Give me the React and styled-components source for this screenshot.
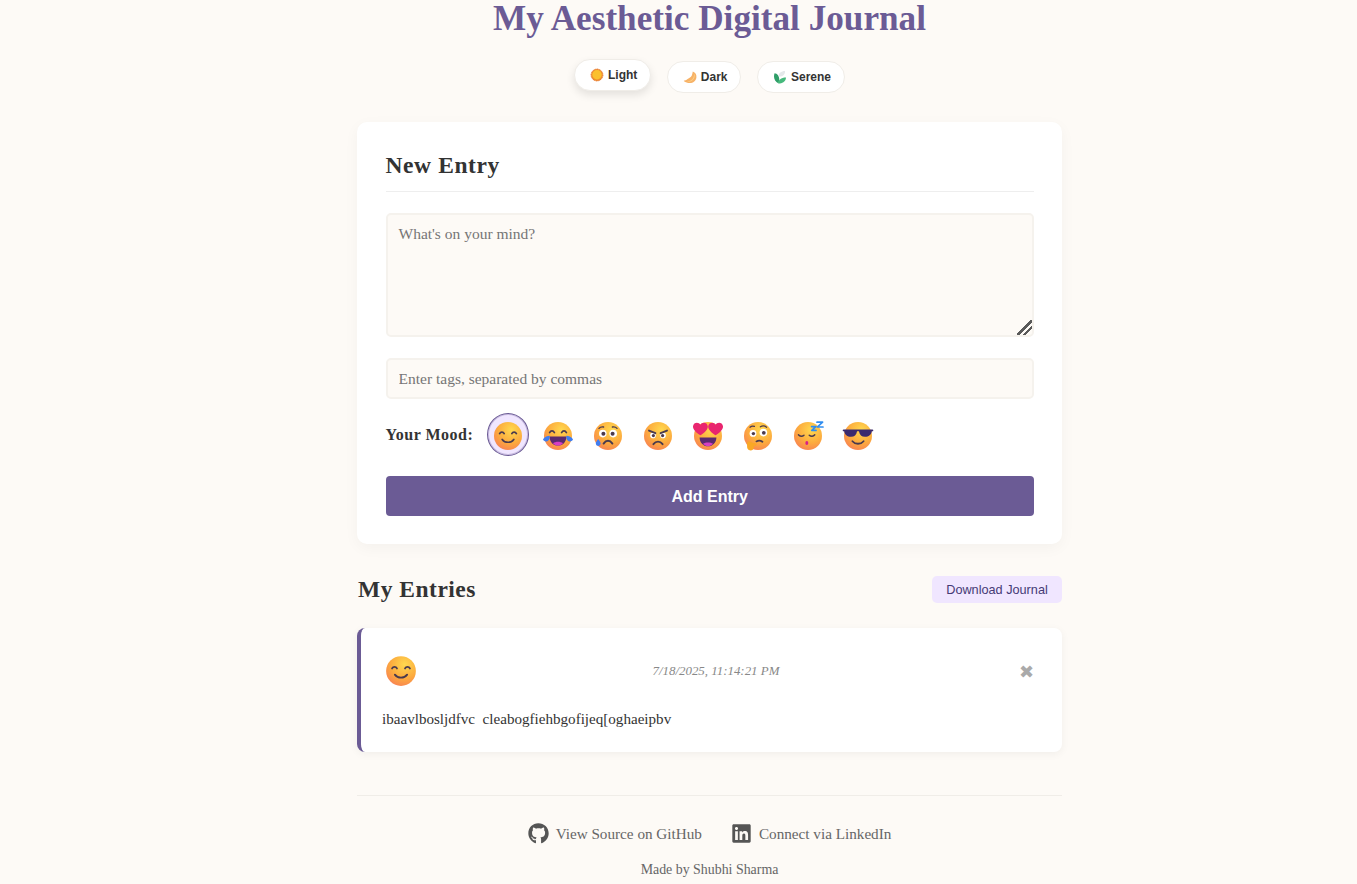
import React, { useId } from 'react';
import styled, { createGlobalStyle } from 'styled-components';
import { FaGithub, FaLinkedin } from 'react-icons/fa';

const GlobalStyle = createGlobalStyle`
    html, body {
        margin: 0;
        padding: 0;
        background-color: #fdfaf6;
    }
    body {
        font-family: "Liberation Serif", serif;
        color: #333333;
        overflow: hidden;
    }
`;

const Face = ({ size = 32, children }) => {
    const id = useId();
    return (
        <svg width={size} height={size} viewBox="0 0 32 32">
            <defs>
                <radialGradient id={id} cx="0.62" cy="0.28" r="0.85">
                    <stop offset="0" stopColor="#ffd84f" />
                    <stop offset="0.55" stopColor="#fcab3e" />
                    <stop offset="0.85" stopColor="#f98a4e" />
                    <stop offset="1" stopColor="#f27f9c" />
                </radialGradient>
            </defs>
            <circle cx="16" cy="16" r="14" fill={`url(#${id})`} />
            {children}
        </svg>
    );
};

const ink = '#4a3a4e';

const Smile = ({ size }) => (
    <Face size={size}>
        <g fill="none" stroke={ink} strokeWidth="1.7" strokeLinecap="round">
            <path d="M7.6 13.6c1-2 3.6-2 4.6 0" />
            <path d="M19.8 13.6c1-2 3.6-2 4.6 0" />
            <path d="M10.2 19.4c2.8 3.8 8.8 3.8 11.6 0" />
        </g>
    </Face>
);

const Laugh = ({ size }) => (
    <Face size={size}>
        <g fill="none" stroke={ink} strokeWidth="1.7" strokeLinecap="round">
            <path d="M7.6 12.6c1.2-2.2 3.6-2.2 4.8 0" />
            <path d="M19.6 12.6c1.2-2.2 3.6-2.2 4.8 0" />
        </g>
        <path d="M7.6 16.4h16.8c0 5.6-3.6 9.2-8.4 9.2s-8.4-3.6-8.4-9.2z" fill="#5b2a70" />
        <path d="M11 23.2c2.8-2 7.2-2 10 0-1.4 1.6-3 2.4-5 2.4s-3.6-.8-5-2.4z" fill="#d63fc4" />
        <path d="M1 19.2c2-2.4 4.6-3.4 6.6-3.4.6 2.8-.8 5.4-3.2 5.6-1.6.2-3-.8-3.4-2.2z" fill="#3f7df0" />
        <path d="M31 19.2c-2-2.4-4.6-3.4-6.6-3.4-.6 2.8.8 5.4 3.2 5.6 1.6.2 3-.8 3.4-2.2z" fill="#3f7df0" />
    </Face>
);

const Cry = ({ size }) => (
    <Face size={size}>
        <circle cx="10.8" cy="13.6" r="3.8" fill="#fff" />
        <circle cx="21.2" cy="13.6" r="3.8" fill="#fff" />
        <circle cx="11.4" cy="13.8" r="2" fill={ink} />
        <circle cx="20.6" cy="13.8" r="2" fill={ink} />
        <g fill="none" stroke={ink} strokeWidth="1.3" strokeLinecap="round">
            <path d="M7 8.4c1.2-1.4 3-1.8 4.6-1.4" />
            <path d="M25 8.4c-1.2-1.4-3-1.8-4.6-1.4" />
        </g>
        <path d="M11.6 23.6c2.6-3.8 6.2-3.8 8.8 0" fill="none" stroke={ink} strokeWidth="1.9" strokeLinecap="round" />
        <path d="M6.2 19c1.4 2 2.4 3.2 2.4 4.6a2.4 2.4 0 0 1-4.800 0c0-1.4 1-2.6 2.4-4.6z" fill="#3f7df0" />
    </Face>
);

const Angry = ({ size }) => (
    <Face size={size}>
        <circle cx="11" cy="15.4" r="2.8" fill="#fff" />
        <circle cx="21" cy="15.4" r="2.8" fill="#fff" />
        <circle cx="11.4" cy="15.6" r="1.6" fill={ink} />
        <circle cx="20.6" cy="15.6" r="1.6" fill={ink} />
        <g fill="none" stroke={ink} strokeWidth="1.9" strokeLinecap="round">
            <path d="M7 10.6l6.4 2.6" />
            <path d="M25 10.6l-6.4 2.6" />
            <path d="M11.4 24.2c2.6-3.4 6.6-3.4 9.2 0" />
        </g>
    </Face>
);

const Heart = ({ x, y }) => (
    <path
        transform={`translate(${x} ${y})`}
        d="M0 -3.6C1.2 -6.4 6.8 -6.6 7.4 -2.2 7.8 1.2 3.4 4.8 0 6.8-3.4 4.8-7.8 1.2-7.4-2.2-6.8-6.6-1.2-6.4 0-3.6z"
        fill="#e9266f"
    />
);

const HeartEyes = ({ size }) => (
    <Face size={size}>
        <path d="M7.6 17.4h16.8c0 5-3.6 8.8-8.4 8.8s-8.4-3.8-8.4-8.8z" fill="#5b2a70" />
        <path d="M11 23.8c2.8-1.8 7.2-1.8 10 0-1.4 1.6-3 2.4-5 2.4s-3.6-.8-5-2.4z" fill="#d63fc4" />
        <Heart x={8.4} y={8.4} />
        <Heart x={23.6} y={8.4} />
    </Face>
);

const Thinking = ({ size }) => (
    <Face size={size}>
        <circle cx="11" cy="13.4" r="3.4" fill="#fff" />
        <circle cx="21.4" cy="12.6" r="3.8" fill="#fff" />
        <circle cx="11.4" cy="13.6" r="1.7" fill={ink} />
        <circle cx="21.8" cy="12.8" r="1.9" fill={ink} />
        <g fill="none" stroke={ink} strokeWidth="1.3" strokeLinecap="round">
            <path d="M8 7.2c1.4-1.2 3-1.4 4.4-.8" />
            <path d="M18.4 6.8c2-1.2 4.4-1 6.2.4" />
            <path d="M14.4 21.4c2-1.2 4-1.2 6 .4" strokeWidth="1.8" />
        </g>
        <path d="M5.4 21.8c1.6-.8 3.4-.2 4.4.6l4 1.2c1.4.6 1 2.4-.4 2.2l-1.6-.2c.4 1.6.2 3.2-1 4.2-1.6 1.2-4.2.8-5.2-1-.8-1.6-.4-5.8-.2-7z" fill="#f9a825" />
    </Face>
);

const Sleepy = ({ size }) => (
    <Face size={size}>
        <g fill="none" stroke={ink} strokeWidth="1.4" strokeLinecap="round">
            <path d="M6.4 14.8c1.4 1.8 4 1.8 5.6.4" />
            <path d="M17.2 15.2c1.6 1.4 4.2 1.4 5.6-.4" />
        </g>
        <ellipse cx="14.8" cy="23" rx="1.5" ry="1.9" fill="#d6208a" />
        <path d="M19.6 6.6h4.2l-4 3.8h4.2M25 2.2h5.6l-5.2 4.8h5.6" fill="none" stroke="#2f8df0" strokeWidth="1.7" strokeLinejoin="round" strokeLinecap="round" />
    </Face>
);

const Cool = ({ size }) => (
    <Face size={size}>
        <path d="M1.6 10.4h28.800" stroke="#3b2a6e" strokeWidth="1.8" strokeLinecap="round" />
        <path d="M3 10h11c.8 0 1.2.6 1 1.4-.6 3.2-2.6 5.4-6 5.4-3.8 0-6.4-2.4-6.8-5.6C2.1 10.5 2.4 10 3 10z" fill="#3b2a6e" />
        <path d="M29 10H18c-.8 0-1.2.6-1 1.4.6 3.2 2.6 5.4 6 5.4 3.8 0 6.4-2.4 6.8-5.6.1-.7-.2-1.2-.8-1.2z" fill="#3b2a6e" />
        <path d="M10.4 21.2c2.8 3.4 8.4 3.4 11.2 0" fill="none" stroke={ink} strokeWidth="1.8" strokeLinecap="round" />
    </Face>
);

const Sun = () => (
    <svg width="14" height="14" viewBox="0 0 14 14">
        <circle cx="7" cy="7" r="5.9" fill="#ef8f2e" strokeDasharray="1.2 .6" stroke="#e8762c" strokeWidth="1" />
        <circle cx="7" cy="6.8" r="4.7" fill="#fbc02d" />
    </svg>
);

const Moon = () => (
    <svg width="14" height="14" viewBox="0 0 14 14">
        <path d="M9.8 1.4c2.6.8 4 3.2 3.6 6-.4 3.2-3.2 5.600-6.600 5.600-2.200 0-4.200-.6-5.800-1.800-.4-.4 0-.8.4-.8 1.200.2 2.200-.6 3.200-1.400 1.800-1.200 3.200-1.600 4.200-3.600.4-1.200.6-2.400 1-4z" fill="#f7b267" />
        <path d="M11.4 3.400c.8 2.800 0 5.400-2.200 7-1.600 1.200-3.600 1.600-5.600 1.200 3-.2 5.800-1.800 6.800-4.200.6-1.400.8-2.800 1-4z" fill="#fcd28a" />
    </svg>
);

const Herb = () => (
    <svg width="14" height="14" viewBox="0 0 14 14">
        <path d="M1.6 3.200c2.800.4 4.400 2.400 4.600 5.200.2 1.800-.2 3.400-1 4.800C2.600 12 1 9.400 1 6.600c0-1.200.2-2.400.6-3.400z" fill="#2f9e68" />
        <path d="M5 13.200c.2-3 3-5.600 8-5.600-.2 3.600-3.200 6.600-8 5.600z" fill="#46b97c" />
        <path d="M5.400 6.200C5.600 3.400 8.200 1 12 1c.2 1.800-.4 3.400-1.800 4.400-1.400 1-3 1.200-4.800.8z" fill="#e4e8ea" />
    </svg>
);

const moods = [Smile, Laugh, Cry, Angry, HeartEyes, Thinking, Sleepy, Cool];

const App = () => {
    return (
        <Page>
            <GlobalStyle />
            <Container>
                <Title>My Aesthetic Digital Journal</Title>
                <ThemeRow>
                    <ThemeButton $active><Sun /> Light</ThemeButton>
                    <ThemeButton><Moon /> Dark</ThemeButton>
                    <ThemeButton><Herb /> Serene</ThemeButton>
                </ThemeRow>

                <FormCard>
                    <CardTitle>New Entry</CardTitle>
                    <EntryText placeholder="What's on your mind?" />
                    <TagInput placeholder="Enter tags, separated by commas" />
                    <MoodRow>
                        <MoodLabel>Your Mood:</MoodLabel>
                        <MoodList>
                            {moods.map((Mood, i) => (
                                <MoodButton key={i} $selected={i === 0}>
                                    <Mood size={32} />
                                </MoodButton>
                            ))}
                        </MoodList>
                    </MoodRow>
                    <AddButton>Add Entry</AddButton>
                </FormCard>

                <EntriesHeader>
                    <EntriesTitle>My Entries</EntriesTitle>
                    <DownloadButton>Download Journal</DownloadButton>
                </EntriesHeader>

                <EntryCard>
                    <EntryTop>
                        <EntryMood><Smile size={34} /></EntryMood>
                        <EntryDate>7/18/2025, 11:14:21 PM</EntryDate>
                        <DeleteButton>✖</DeleteButton>
                    </EntryTop>
                    <EntryBody>ibaavlbosljdfvc&nbsp; cleabogfiehbgofijeq[oghaeipbv</EntryBody>
                </EntryCard>

                <Footer>
                    <FooterLinks>
                        <FooterLink><FaGithub size={21} /> View Source on GitHub</FooterLink>
                        <FooterLink><FaLinkedin size={21} /> Connect via LinkedIn</FooterLink>
                    </FooterLinks>
                    <Credit>Made by Shubhi Sharma</Credit>
                </Footer>
            </Container>
        </Page>
    );
};

export default App;

const Page = styled.div`
    min-height: 884px;
    padding-left: 357px;
    box-sizing: border-box;
`;

const Container = styled.div`
    width: 705px;
    display: flex;
    flex-direction: column;
`;

const Title = styled.h1`
    margin: 0;
    font-size: 35.2px;
    line-height: 37px;
    font-weight: 700;
    color: #6b5b95;
    text-align: center;
`;

const ThemeRow = styled.div`
    display: flex;
    justify-content: center;
    gap: 15.5px;
    margin-top: 24px;
`;

const ThemeButton = styled.button`
    display: inline-flex;
    align-items: center;
    gap: 4px;
    height: 32px;
    padding: 0 13px 0 15px;
    border-radius: 20px;
    border: 1px solid #f0ede8;
    background-color: #ffffff;
    font-family: "Liberation Sans", sans-serif;
    font-size: 12px;
    font-weight: 700;
    color: #333333;
    ${({ $active }) => $active && `
        transform: translateY(-2px);
        box-shadow: 0 4px 8px rgba(0, 0, 0, 0.1);
    `}
`;

const FormCard = styled.section`
    margin-top: 29px;
    height: 422px;
    box-sizing: border-box;
    padding: 28px 28px 28px 28.5px;
    background-color: #ffffff;
    border-radius: 10px;
    box-shadow: 0 4px 15px rgba(0, 0, 0, 0.04);
    display: flex;
    flex-direction: column;
`;

const CardTitle = styled.h2`
    margin: 0;
    padding-bottom: 11px;
    border-bottom: 1px solid #eeeeee;
    font-size: 23.5px;
    letter-spacing: 0.6px;
    line-height: 30px;
    font-weight: 700;
    color: #333333;
`;

const EntryText = styled.textarea`
    margin-top: 21px;
    height: 124px;
    box-sizing: border-box;
    padding: 10px 11px;
    background-color: #fdfaf6;
    border: 2px solid #f5f2ed;
    border-radius: 5px;
    font-family: "Liberation Serif", serif;
    font-size: 15.5px;
    color: #333333;
    outline: none;
    &::placeholder {
        color: #757575;
    }
    &::-webkit-resizer {
        background: linear-gradient(135deg, transparent 45%, #5a5a5a 45% 57%, transparent 57% 70%, #5a5a5a 70% 80%, transparent 80%);
    }
`;

const TagInput = styled.input`
    margin-top: 21px;
    height: 41px;
    box-sizing: border-box;
    padding: 1px 11px 0;
    background-color: #fdfaf6;
    border: 2px solid #f5f2ed;
    border-radius: 5px;
    font-family: "Liberation Serif", serif;
    font-size: 15.5px;
    outline: none;
    &::placeholder {
        color: #757575;
    }
`;

const MoodRow = styled.div`
    margin-top: 14px;
    display: flex;
    align-items: center;
    gap: 14px;
`;

const MoodLabel = styled.span`
    font-size: 16px;
    letter-spacing: 0.5px;
    font-weight: 700;
    color: #333333;
`;

const MoodList = styled.div`
    display: flex;
    gap: 8px;
`;

const MoodButton = styled.button`
    width: 42px;
    height: 43px;
    padding: 2px 1px 0 0;
    display: flex;
    align-items: center;
    justify-content: center;
    border-radius: 50%;
    border: 1px solid ${({ $selected }) => ($selected ? '#6b5b95' : 'transparent')};
    background-color: ${({ $selected }) => ($selected ? '#f0e6ff' : 'transparent')};
    box-shadow: ${({ $selected }) => ($selected ? 'inset 0 0 0 1px rgba(107, 91, 149, 0.3)' : 'none')};
`;

const AddButton = styled.button`
    margin-top: 20px;
    height: 40px;
    padding: 1px 0 0;
    border: none;
    border-radius: 4px;
    background-color: #6b5b95;
    color: #ffffff;
    font-family: "Liberation Sans", sans-serif;
    font-size: 16px;
    font-weight: 700;
`;

const EntriesHeader = styled.div`
    margin-top: 32px;
    display: flex;
    justify-content: space-between;
    align-items: center;
`;

const EntriesTitle = styled.h2`
    margin: 0;
    padding-left: 1px;
    font-size: 23.5px;
    letter-spacing: 0.5px;
    line-height: 27px;
    font-weight: 700;
    color: #333333;
`;

const DownloadButton = styled.button`
    width: 130px;
    height: 27px;
    padding: 0;
    border: none;
    border-radius: 5px;
    background-color: #f0e6ff;
    color: #453a75;
    font-family: "Liberation Sans", sans-serif;
    font-size: 12.7px;
`;

const EntryCard = styled.article`
    margin-top: 25px;
    height: 124px;
    box-sizing: border-box;
    padding: 27px 20px 0 21px;
    background-color: #ffffff;
    border-left: 4px solid #6b5b95;
    border-radius: 8px;
    box-shadow: 0 2px 8px rgba(0, 0, 0, 0.05);
`;

const EntryTop = styled.div`
    display: flex;
    justify-content: space-between;
    align-items: center;
    height: 32px;
`;

const EntryMood = styled.span`
    display: flex;
    padding-left: 2px;
`;

const EntryDate = styled.span`
    font-size: 12.9px;
    font-style: italic;
    color: #888888;
`;

const DeleteButton = styled.button`
    border: none;
    background: none;
    padding: 0 8px 0 5px;
    font-family: "DejaVu Sans", sans-serif;
    font-size: 18px;
    color: #aaaaaa;
`;

const EntryBody = styled.p`
    margin: 23px 0 0;
    font-size: 15.1px;
    line-height: 18px;
    color: #333333;
`;

const Footer = styled.footer`
    margin-top: 43px;
    padding-top: 27px;
    border-top: 1px solid #f0ede8;
    display: flex;
    flex-direction: column;
    align-items: center;
`;

const FooterLinks = styled.div`
    display: flex;
    gap: 29px;
`;

const FooterLink = styled.a`
    display: inline-flex;
    align-items: center;
    gap: 7px;
    font-size: 15.2px;
    color: #666666;
    svg {
        color: #555555;
    }
`;

const Credit = styled.p`
    margin: 18px 0 0;
    font-size: 13.9px;
    color: #666666;
`;
